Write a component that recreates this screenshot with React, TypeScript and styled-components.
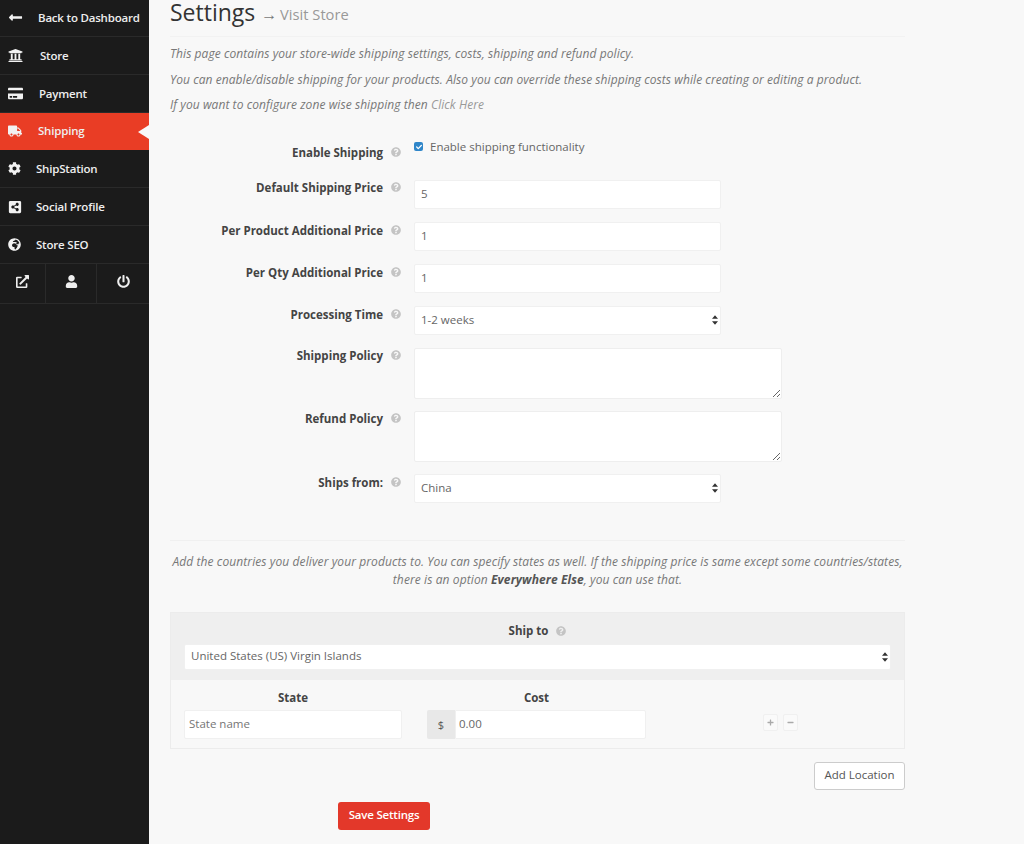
import React from "react";
import styled, { createGlobalStyle } from "styled-components";
import {
  FaLongArrowAltLeft, FaUniversity, FaCreditCard, FaTruck, FaCog,
  FaShareAltSquare, FaGlobeAfrica, FaExternalLinkAlt, FaUser, FaPowerOff, FaQuestionCircle,
  FaPlus, FaMinus, FaCheck,
} from "react-icons/fa";

const Global = createGlobalStyle`
  html, body { margin: 0; padding: 0; height: 844px; overflow: hidden; background: #f8f8f8; }
  * { box-sizing: border-box; }
  body { font-family: "Open Sans", "Liberation Sans", sans-serif; color: #666; font-size: 12px; }
`;

const Page = styled.div`display: flex; width: 1024px; height: 844px; overflow: hidden;`;
const Sidebar = styled.nav`width: 149px; flex: none; background: #1b1b1b; display: flex; flex-direction: column; padding-top: 0;`;
const MenuList = styled.div`margin-top: -1px;`;
const MenuItem = styled.div<{ $active?: boolean }>`
  position: relative;
  height: 37.85px; display: flex; align-items: center;
  padding-left: 8px; color: #eee; font-size: 11.5px; font-weight: 600; letter-spacing: -0.2px; white-space: nowrap;
  background: ${(p) => (p.$active ? "#e93d25" : "transparent")};
  border-bottom: 1px solid ${(p) => (p.$active ? "#e93d25" : "#2a2a2a")};
`;
const MenuText = styled.span<{ $left: number }>`margin-left: ${(p) => p.$left}px;`;
const IconSlot = styled.span<{ $size: number }>`width: 16px; display: flex; justify-content: flex-start; font-size: ${(p) => p.$size}px; color: #f2f2f2; flex: none;`;
const ActiveNotch = styled.i`
  position: absolute; right: 0; top: 12px; width: 0; height: 0;
  border-style: solid; border-width: 7px 11px 7px 0; border-color: transparent #f8f8f8 transparent transparent;
`;
const BottomRow = styled.div`display: grid; grid-template-columns: 45px 51px 1fr; height: 40px; border-bottom: 1px solid #2a2a2a;`;
const BottomCell = styled.div`
  display: flex; align-items: center; justify-content: center; color: #eee; font-size: 13px;
  padding-bottom: 4px;
  & + & { border-left: 1px solid #2a2a2a; }
`;

const Main = styled.main`flex: none; width: 875px; padding: 0 119px 0 21px;`;
const Header = styled.header`height: 37px; border-bottom: 1px solid #f2f2f2; display: flex; align-items: flex-start;`;
const Title = styled.h1`margin: 0; font-size: 23px; line-height: 24px; font-weight: 400; color: #333;`;
const Visit = styled.span`margin: 4px 0 0 6px; font-size: 14.7px; line-height: 20px; color: #999; white-space: nowrap;`;
const VisitArrow = styled.span`color: #777; font-size: 16px; margin-right: -1px;`;
const Intro = styled.p`
  margin: 0; height: 25.6px; line-height: 25.6px; font-size: 12px; font-style: italic; color: #777; white-space: nowrap; letter-spacing: 0.07px;
`;
const IntroBlock = styled.div`padding-top: 4px; margin-bottom: 22px;`;
const ClickHere = styled.a`color: #999;`;

const FormRow = styled.div<{ $h: number }>`
  display: grid; grid-template-columns: 213px 31px 1fr; height: ${(p) => p.$h}px; margin-bottom: 13px; align-items: start;
`;
const Label = styled.label<{ $top: number }>`
  text-align: right; font-size: 11.5px; font-weight: 700; color: #444; padding-top: ${(p) => p.$top}px; line-height: 16px; white-space: nowrap;
`;
const Help = styled.span<{ $top: number }>`
  padding: ${(p) => p.$top}px 0 0 8px; color: #c4c4c4; font-size: 10px; display: block; line-height: 16px;
`;
const Field = styled.input`
  display: block; width: 307px; height: 29px; border: 1px solid #f0f0f0; background: #fff; border-radius: 2px;
  padding: 0 6px 2px; font: 400 11.5px "Open Sans", sans-serif; color: #666; outline: none;
`;
const Area = styled.textarea`
  display: block; width: 368px; height: 51px; border: 1px solid #eee; background: #fff; border-radius: 2px; padding: 4px 7px; outline: none;
`;
const SelectWrap = styled.div<{ $w: number; $h?: number }>`position: relative; width: ${(p) => p.$w}px; height: ${(p) => p.$h ?? 29}px;`;
const SelectBox = styled.select`
  appearance: none; width: 100%; height: 100%; border: 1px solid #f0f0f0; background: #fff; border-radius: 2px;
  padding: 0 6px 2px; font: 400 11.5px "Open Sans", sans-serif; color: #666; outline: none;
`;
const Arrows = styled.svg`position: absolute; right: 3px; top: 50%; margin-top: -5px; width: 6px; height: 10px; pointer-events: none;`;
const CheckLine = styled.div`display: flex; align-items: center; gap: 7px; margin-top: -1px; font-size: 11.5px; color: #666; line-height: 16px;`;
const CheckMark = styled.span`
  width: 9px; height: 9px; border-radius: 2px; background: #2f86c9; color: #fff; display: flex; align-items: center; justify-content: center; font-size: 6px;
`;
const Divider = styled.hr`border: 0; border-top: 1px solid #f0f0f0; margin: 37px 0 0;`;
const Note = styled.p`
  margin: 12px -4px 23px; text-align: center; font-size: 12px; line-height: 18px; font-style: italic; color: #777; letter-spacing: 0.1px; white-space: nowrap;
  b { color: #555; }
`;
const ShipBox = styled.section`border: 1px solid #ececec; height: 137px;`;
const ShipHead = styled.div`background: #efefef; height: 67px; padding: 9px 13px 0;`;
const ShipTitle = styled.div`
  display: flex; justify-content: center; gap: 8px; font-size: 11.5px; font-weight: 700; color: #444; line-height: 18px; margin-bottom: 4px; align-items: center;
  svg { color: #c4c4c4; font-size: 10px; }
`;
const ShipBody = styled.div`display: grid; grid-template-columns: 218px 245px 1fr; padding: 10px 13px 0;`;
const ColHead = styled.div<{ $w: number }>`
  width: ${(p) => p.$w}px; text-align: center; font-size: 11.5px; font-weight: 700; color: #444; line-height: 16px; height: 20px;
`;
const StateInput = styled(Field)`width: 218px; padding: 0 4px 2px;`;
const CostCell = styled.div`padding-left: 25px;`;
const CostGroup = styled.div`display: flex; height: 29px; width: 219px;`;
const Addon = styled.span`width: 28px; background: #e8e8e8; border-radius: 2px 0 0 2px; display: flex; align-items: center; justify-content: center; font-size: 11px; color: #555;`;
const CostInput = styled(Field)`width: 191px; border-radius: 0 2px 2px 0; padding: 0 3px 2px;`;
const Actions = styled.div`display: flex; gap: 5px; padding: 24px 0 0 116px;`;
const SmallBtn = styled.span`
  width: 15px; height: 17px; border: 1px solid #f0f0f0; background: #fafafa; border-radius: 2px; display: flex; align-items: center; justify-content: center; color: #aaa; font-size: 7px;
`;
const AddRow = styled.div`display: flex; justify-content: flex-end; margin-top: 13px;`;
const AddBtn = styled.button`
  width: 91px; height: 28px; border: 1px solid #ccc; border-radius: 3px; background: #fff; color: #555; font: 400 11.5px "Open Sans", sans-serif; padding: 0 0 2px;
`;
const SaveRow = styled.div`padding-left: 168px; margin-top: 12px;`;
const SaveBtn = styled.button`
  width: 92px; height: 28px; border: 0; border-radius: 3px; background: #e3382a; color: #fff; font: 600 11.5px "Open Sans", sans-serif; letter-spacing: -0.2px; padding: 0 0 2px;
`;

const UpDown = () => (
  <Arrows viewBox="0 0 7 11"><path d="M3.5 0 7 4H0zM0 7h7l-3.5 4z" fill="#333" /></Arrows>
);
const menu = [
  { icon: <FaLongArrowAltLeft />, size: 15, text: "Back to Dashboard", left: 14 },
  { icon: <FaUniversity />, size: 15, text: "Store", left: 16 },
  { icon: <FaCreditCard />, size: 15, text: "Payment", left: 15 },
  { icon: <FaTruck />, size: 14, text: "Shipping", left: 14, active: true },
  { icon: <FaCog />, size: 13, text: "ShipStation", left: 12 },
  { icon: <FaShareAltSquare />, size: 14, text: "Social Profile", left: 12 },
  { icon: <FaGlobeAfrica />, size: 13, text: "Store SEO", left: 12 },
];
const Q = () => <FaQuestionCircle />;

export default function App() {
  return (
    <Page>
      <Global />
      <Sidebar>
        <MenuList>
          {menu.map((m) => (
            <MenuItem key={m.text} $active={m.active}>
              <IconSlot $size={m.size}>{m.icon}</IconSlot>
              <MenuText $left={m.left}>{m.text}</MenuText>
              {m.active && <ActiveNotch />}
            </MenuItem>
          ))}
          <BottomRow>
            <BottomCell><FaExternalLinkAlt /></BottomCell>
            <BottomCell><FaUser /></BottomCell>
            <BottomCell><FaPowerOff /></BottomCell>
          </BottomRow>
        </MenuList>
      </Sidebar>
      <Main>
        <Header>
          <Title>Settings</Title>
          <Visit><VisitArrow>→</VisitArrow> Visit Store</Visit>
        </Header>
        <IntroBlock>
          <Intro>This page contains your store-wide shipping settings, costs, shipping and refund policy.</Intro>
          <Intro>You can enable/disable shipping for your products. Also you can override these shipping costs while creating or editing a product.</Intro>
          <Intro>If you want to configure zone wise shipping then <ClickHere>Click Here</ClickHere></Intro>
        </IntroBlock>
        <FormRow $h={27}>
          <Label $top={5}>Enable Shipping</Label>
          <Help $top={5}><Q /></Help>
          <CheckLine><CheckMark><FaCheck /></CheckMark>Enable shipping functionality</CheckLine>
        </FormRow>
        <FormRow $h={29}>
          <Label $top={0}>Default Shipping Price</Label>
          <Help $top={0}><Q /></Help>
          <Field readOnly value="5" />
        </FormRow>
        <FormRow $h={29}>
          <Label $top={1}>Per Product Additional Price</Label>
          <Help $top={1}><Q /></Help>
          <Field readOnly value="1" />
        </FormRow>
        <FormRow $h={29}>
          <Label $top={1}>Per Qty Additional Price</Label>
          <Help $top={1}><Q /></Help>
          <Field readOnly value="1" />
        </FormRow>
        <FormRow $h={29}>
          <Label $top={1}>Processing Time</Label>
          <Help $top={1}><Q /></Help>
          <SelectWrap $w={307}>
            <SelectBox defaultValue="1-2 weeks"><option>1-2 weeks</option></SelectBox>
            <UpDown />
          </SelectWrap>
        </FormRow>
        <FormRow $h={50}>
          <Label $top={0}>Shipping Policy</Label>
          <Help $top={0}><Q /></Help>
          <Area readOnly />
        </FormRow>
        <FormRow $h={50}>
          <Label $top={0}>Refund Policy</Label>
          <Help $top={0}><Q /></Help>
          <Area readOnly />
        </FormRow>
        <FormRow $h={29}>
          <Label $top={1}>Ships from:</Label>
          <Help $top={1}><Q /></Help>
          <SelectWrap $w={307}>
            <SelectBox defaultValue="China"><option>China</option></SelectBox>
            <UpDown />
          </SelectWrap>
        </FormRow>
        <Divider />
        <Note>
          Add the countries you deliver your products to. You can specify states as well. If the shipping price is same except some countries/states,<br />
          there is an option <b>Everywhere Else</b>, you can use that.
        </Note>
        <ShipBox>
          <ShipHead>
            <ShipTitle>Ship to <Q /></ShipTitle>
            <SelectWrap $w={707} $h={26}>
              <SelectBox defaultValue="vi"><option value="vi">United States (US) Virgin Islands</option></SelectBox>
              <UpDown />
            </SelectWrap>
          </ShipHead>
          <ShipBody>
            <div>
              <ColHead $w={218}>State</ColHead>
              <StateInput readOnly placeholder="State name" />
            </div>
            <CostCell>
              <ColHead $w={219}>Cost</ColHead>
              <CostGroup>
                <Addon>$</Addon>
                <CostInput readOnly value="0.00" />
              </CostGroup>
            </CostCell>
            <Actions>
              <SmallBtn><FaPlus /></SmallBtn>
              <SmallBtn><FaMinus /></SmallBtn>
            </Actions>
          </ShipBody>
        </ShipBox>
        <AddRow><AddBtn>Add Location</AddBtn></AddRow>
        <SaveRow><SaveBtn>Save Settings</SaveBtn></SaveRow>
      </Main>
    </Page>
  );
}
